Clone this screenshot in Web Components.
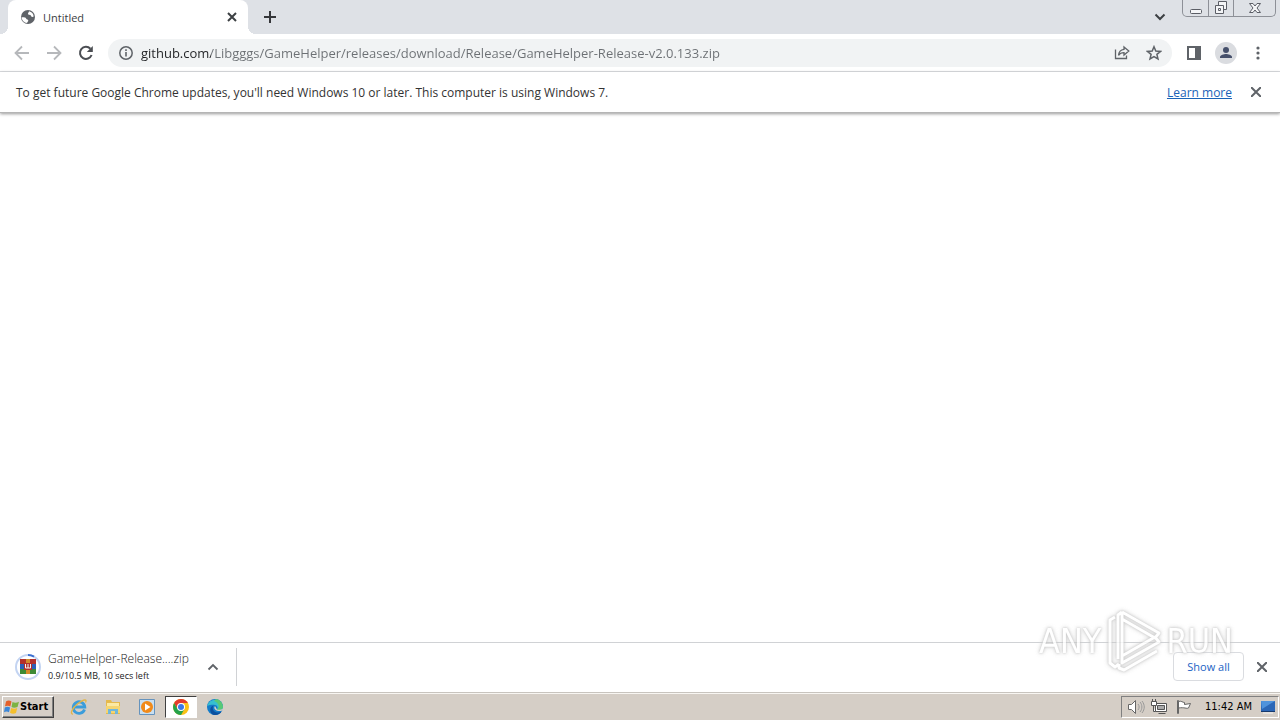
<!DOCTYPE html>
<html lang="en">
<head>
<meta charset="utf-8">
<title>Untitled</title>
<style>
html, body { margin: 0; height: 100%; }
body { background: #fff; font-family: "Open Sans", "Noto Sans", sans-serif; color: #333; }
</style>
</head>
<body>
<desktop-screen></desktop-screen>
<script>
const define = (name, html, init) => {
  const t = document.createElement('template');
  t.innerHTML = '<style>*{box-sizing:border-box}button{font:inherit;color:inherit;background:none;border:0;margin:0;padding:0}svg{display:block;flex:none}</style>' + html;
  customElements.define(name, class extends HTMLElement {
    constructor() {
      super();
      this.attachShadow({ mode: 'open' }).append(t.content.cloneNode(true));
    }
    connectedCallback() { if (init) init(this); }
  });
};

define('icon-button', `
<style>
:host{display:block;flex:none;width:32px;height:32px;color:#5f6368}
button{width:100%;height:100%;display:flex;align-items:center;justify-content:center}
</style>
<button type="button"><slot></slot></button>`, el => {
  el.shadowRoot.querySelector('button').setAttribute('aria-label', el.getAttribute('label') || '');
});

define('caption-buttons', `
<style>
:host{display:flex;flex:none;height:17px;border:1px solid #8d9097;border-top:0;border-radius:0 0 5px 5px;background:#dee1e6}
button{display:flex;flex:none;align-items:center;justify-content:center;width:25px}
button + button{border-left:1px solid #8d9097}
.close{width:42px}
svg{fill:#f4f5f7;stroke:#5b5e66}
</style>
<button type="button" aria-label="Minimize"><svg width="14" height="14"><rect x="1.5" y="8.500" width="11" height="4" rx="1"/></svg></button>
<button type="button" aria-label="Restore"><svg width="14" height="14"><path d="M4.500 .5h8v8h-8z"/><path d="M1.500 4.500h8v8h-8z"/><path d="M4.500 7.500h2v2h-2z"/></svg></button>
<button class="close" type="button" aria-label="Close"><svg width="14" height="14"><path d="M1.500 2.500h3.500l2 2.500 2-2.500h3.500l-3.500 4.500 3.500 4.500H9L7 9l-2 2.500H1.500L5 7z"/></svg></button>`);

define('tab-strip', `
<style>
:host{display:flex;height:34px;background:#dee1e6;padding-left:8px;align-items:flex-start;color:#3c4043}
.tab{position:relative;display:flex;align-items:center;width:240px;height:34px;padding:0 8px 0 12px;background:#fff;border-radius:8px 8px 0 0;font-size:11px}
.tab::before,.tab::after{content:"";position:absolute;bottom:0;width:8px;height:8px}
.tab::before{left:-8px;background:radial-gradient(circle at 0 0,#dee1e6 8px,#fff 8px)}
.tab::after{right:-8px;background:radial-gradient(circle at 100% 0,#dee1e6 8px,#fff 8px)}
.name{flex:1;margin-left:7px}
.close{width:16px;height:16px;color:#3c4043}
.new{width:28px;height:34px;margin-left:8px;color:#35363a}
.search{width:28px;height:34px;margin:0 8px 0 auto;color:#3c4043}
caption-buttons{margin-right:4px}
</style>
<div class="tab">
<svg width="16" height="16" viewBox="0 0 16 16"><circle cx="8" cy="8" r="7" fill="#5f6368"/><path d="M1.600 8.300c2 0 4-.2 4.500 1.200.4 1.200 2.400.6 2.200 2.300-.1 1-1 1-1.200 2.300C4 13.700 1.700 11.300 1.600 8.300z" fill="#fff"/><path d="M9 2.300a6 6 0 0 1 4.700 5.200c-1.200.8-2.300.3-2.700-.6C10.500 5.500 8 6.400 8 4.600 8 3.800 9 3.500 9 2.300z" fill="#fff"/></svg>
<span class="name">Untitled</span>
<icon-button class="close" label="Close tab"><svg width="10" height="10" stroke="currentColor" stroke-width="2"><path d="M1 1l8 8M9 1L1 9"/></svg></icon-button>
</div>
<icon-button class="new" label="New tab"><svg width="12" height="12" stroke="currentColor" stroke-width="2"><path d="M6 0v12M0 6h12"/></svg></icon-button>
<icon-button class="search" label="Search tabs"><svg width="12" height="8" fill="none" stroke="currentColor" stroke-width="2"><path d="M1.500 1.500L6 6l4.500-4.500"/></svg></icon-button>
<caption-buttons></caption-buttons>`);

define('address-field', `
<style>
:host{display:flex;align-items:center;flex:1;min-width:0;height:28px;padding:0 2px 0 10px;border-radius:14px;background:#f1f3f4;color:#5f6368}
input{flex:1;min-width:0;height:28px;margin:0 0 0 7px;padding:0;border:0;outline:0;font:13px "Open Sans","Noto Sans",sans-serif;color:#6c7074;-webkit-text-fill-color:transparent;background:linear-gradient(90deg,#202124 70px,#6c7074 70px);-webkit-background-clip:text;background-clip:text}
</style>
<svg width="16" height="16" fill="none" stroke="currentColor" stroke-width="1.500"><circle cx="8" cy="8" r="6.200"/><path d="M8 7v4.500M8 4.300v1.700" stroke-width="1.600"/></svg>
<input type="text" aria-label="Address and search bar" value="github.com/Libgggs/GameHelper/releases/download/Release/GameHelper-Release-v2.0.133.zip" spellcheck="false">
<icon-button label="Share"><svg width="16" height="16" fill="none" stroke="currentColor" stroke-width="1.300"><path d="M1.500 4.500v9h11v-3"/><path d="M10 2l4.800 4L10 10V7.700c-2.500 0-4.300.8-5.500 2.600C4.800 7 6.500 4.700 10 4.300z"/></svg></icon-button>
<icon-button label="Bookmark this tab"><svg width="16" height="16" fill="none" stroke="currentColor" stroke-width="1.500"><path d="M8 1.700l1.800 4.300 4.700.4-3.600 3 1.100 4.600-4-2.400-4 2.400 1.100-4.600-3.600-3 4.700-.4z"/></svg></icon-button>`);

define('browser-toolbar', `
<style>
:host{display:flex;align-items:center;height:38px;padding:0 6px;background:#fff;border-bottom:1px solid #dadce0}
.dim{color:#b6b8bb}
address-field{margin:0 6px}
.reload{color:#4b4e53}
</style>
<icon-button class="dim" label="Back"><svg width="16" height="16" fill="none" stroke="currentColor" stroke-width="1.800"><path d="M15 8H2M8 1.500L1.500 8 8 14.500"/></svg></icon-button>
<icon-button class="dim" label="Forward"><svg width="16" height="16" fill="none" stroke="currentColor" stroke-width="1.800"><path d="M1 8h13M8 1.500L14.500 8 8 14.500"/></svg></icon-button>
<icon-button class="reload" label="Reload"><svg width="16" height="16" fill="none" stroke="currentColor" stroke-width="2"><path d="M13.600 10a6 6 0 1 1-1.200-6.200"/><path d="M14.800 1v6H8.800z" fill="currentColor" stroke="none"/></svg></icon-button>
<address-field></address-field>
<icon-button label="Side panel"><svg width="14" height="14"><path fill="currentColor" fill-rule="evenodd" d="M0 0h14v14H0zM2 2v10h6V2z"/></svg></icon-button>
<icon-button label="Profile"><svg width="22" height="22"><circle cx="11" cy="11" r="11" fill="#dadce0"/><circle cx="11" cy="8" r="3" fill="#46506b"/><path d="M5 16v-1c0-2 4-3 6-3s6 1 6 3v1z" fill="#46506b"/></svg></icon-button>
<icon-button label="Menu"><svg width="4" height="16" fill="currentColor"><circle cx="2" cy="3" r="1.600"/><circle cx="2" cy="8" r="1.600"/><circle cx="2" cy="13" r="1.600"/></svg></icon-button>`);

define('info-bar', `
<style>
:host{display:flex;align-items:center;height:41px;padding:0 8px 0 16px;background:#fff;border-bottom:1px solid #b5b5b5;box-shadow:0 1px 3px #999;font-size:12px;color:#333;position:relative}
p{margin:0;flex:1}
a{color:#1a63b8;margin-right:8px}
</style>
<p>To get future Google Chrome updates, you'll need Windows 10 or later. This computer is using Windows 7.</p>
<a href="#">Learn more</a>
<icon-button label="Dismiss"><svg width="10" height="10" stroke="currentColor" stroke-width="2"><path d="M0 0l10 10M10 0L0 10"/></svg></icon-button>`);

define('download-item', `
<style>
:host{display:flex;align-items:center;width:237px;height:38px;padding-left:15px;border-right:1px solid #d0d2d5}
.text{flex:1;margin-left:7px;white-space:nowrap}
.file{font-size:12px;font-weight:300;line-height:18px;color:#222}
.state{font-size:9px;line-height:15px;color:#222}
icon-button{margin-right:7px}
</style>
<svg width="26" height="26" viewBox="0 0 26 26"><circle cx="13" cy="13" r="12" fill="#fff" stroke="#c3d4f2" stroke-width="2"/><path d="M13 1a12 12 0 0 1 6 1.600" fill="none" stroke="#3b6fd0" stroke-width="2"/>
<path fill="#b3302c" d="M5 5h16v5H5z"/><path fill="#2d5fb8" d="M5 10h16v5H5z"/><path fill="#3d8a35" d="M5 15h16v5H5z"/><path fill="#d48a2c" d="M11 5h4v15h-4z"/><path fill="#b3302c" d="M9 9h8v7H9z"/><path d="M10.500 10v4h5v-4M13 10v4" fill="none" stroke="#f5f5f5"/></svg>
<div class="text"><div class="file">GameHelper-Release....zip</div><div class="state">0.9/10.5 MB, 10 secs left</div></div>
<icon-button label="Download options"><svg width="12" height="8" fill="none" stroke="currentColor" stroke-width="1.800"><path d="M1.500 6.500L6 2l4.500 4.500"/></svg></icon-button>`);

define('download-shelf', `
<style>
:host{display:flex;align-items:center;height:50px;background:#fff;border-top:1px solid #d0d2d5;padding:0 2px 2px 0}
.all{width:71px;height:29px;margin-left:auto;margin-right:2px;border:1px solid #dadce0;border-radius:4px;color:#1a63c4;font-size:11px}
</style>
<download-item></download-item>
<button class="all" type="button">Show all</button>
<icon-button label="Close downloads"><svg width="10" height="10" stroke="currentColor" stroke-width="2"><path d="M0 0l10 10M10 0L0 10"/></svg></icon-button>`);

define('task-bar', `
<style>
:host{display:flex;align-items:center;height:28px;background:#d5cec6;border-top:1px solid #c8c4be;box-shadow:inset 0 1px #f8f6f2;padding:0 1px 0 2px;color:#000;font:11px "DejaVu Sans Condensed","Noto Sans",sans-serif}
.start{display:flex;align-items:center;width:52px;height:22px;padding-left:1px;border:1px solid;border-color:#fff #404040 #404040 #fff;box-shadow:inset -1px -1px #808080;font:bold 11px "DejaVu Sans Condensed",sans-serif}
nav{display:flex;align-items:center;margin-left:9px;gap:2px}
nav icon-button{height:22px}
.active{background:#fff;border:1px solid;border-color:#404040 #fff #fff #404040}
.tray{display:flex;align-items:center;height:22px;margin-left:auto;padding:0 2px 0 5px;gap:6px;border:1px solid;border-color:#808080 #fff #fff #808080}
time{margin:0 2px 0 6px}
</style>
<button class="start" type="button"><svg width="16" height="16"><path d="M2 2.500C4 1 6 1.500 7.500 2.500L6.300 7.500C5 6.500 3 6.300 1 7.300z" fill="#e5602a"/><path d="M8.500 3c2 1 4 1 6.500-.3L13.500 8c-2.500 1-4.500.800-6 0z" fill="#7cb342"/><path d="M.8 8.400c2-1 4-.6 5.300.2L5 13.300c-1.500-1-3.500-1-5 0z" fill="#3c87d8"/><path d="M7.200 9c2 1 4 1 6 0L12 14c-2.200 1-4.200.8-6-.3z" fill="#f4bf2c"/></svg><span>Start</span></button>
<nav>
<icon-button label="Internet Explorer"><svg width="18" height="18" fill="none"><path d="M14.500 11.500A5.800 5.800 0 1 1 14.800 9H4" stroke="#3b9ddb" stroke-width="2.800"/><path d="M3 16C-.5 16.500 2 10 8 5.500S17.500 1 15.500 4.500" stroke="#e2b548" stroke-width="1.300"/></svg></icon-button>
<icon-button label="Explorer"><svg width="18" height="18"><path d="M2 2h5l1 2h8v12H2z" fill="#e5b94d"/><path d="M3 5h12v7H3z" fill="#fbe9a3"/><path d="M2 8h14v7H2z" fill="#f5d571"/><path d="M4 16v-5h10v5h-3v-3H7v3z" fill="#70b7db"/></svg></icon-button>
<icon-button label="Media Player"><svg width="18" height="18"><path d="M1.500 1.500h15v15h-15z" fill="#c9dff0" stroke="#6593bd"/><circle cx="9" cy="9" r="6" fill="#f18a19"/><path d="M7 5.500v7L12.500 9z" fill="#fff"/></svg></icon-button>
<icon-button class="active" label="Chrome"><svg width="16" height="16" viewBox="0 0 16 16"><circle cx="8" cy="8" r="8" fill="#fbc116"/><path d="M8 4h6.900A8 8 0 0 0 1.100 4l3.400 6z" fill="#e33b2e"/><path d="M1.100 4A8 8 0 0 0 8 16l3.500-6L8 8 4.500 10z" fill="#25a24a"/><circle cx="8" cy="8" r="4" fill="#fff"/><circle cx="8" cy="8" r="3" fill="#3b78e7"/></svg></icon-button>
<icon-button label="Edge"><svg width="18" height="18"><circle cx="9" cy="9" r="8" fill="#137bc9"/><path d="M1.200 8A8 8 0 0 1 17 9c0 3-4 3.700-6 2.500 1-1 1-4-2-4.500-3-.4-6 .2-7.800 1z" fill="#36bfd0"/><path d="M10 1.100A8 8 0 0 1 17 9c0 3-4 3.700-6 2.500C14 9 13 5 8 3z" fill="#58c976"/><path d="M7.500 7.500c-2 3 0 7 5 7 1.500 0 2.500-.5 3.300-1.200A8 8 0 0 1 7 16.700C3 14 3.500 9 7.500 7.500z" fill="#0b4f9e"/><path d="M9 8c-1.500 1.500-.5 4.500 3.500 5 2 .3 4.200-.7 4.200-.7l.6-2.300C15 12.300 12 12 11 11.500z" fill="#d5cec6"/></svg></icon-button>
</nav>
<div class="tray">
<svg width="18" height="16" fill="#fff" stroke="#666"><path d="M1.500 5.500h3l4-4v13l-4-4h-3z"/><path d="M11 5c1.500 2 1.500 4 0 6M13 3c2.500 3 2.500 7 0 10M15 2c3 4 3 8 0 12" fill="none" stroke="#999"/></svg>
<svg width="18" height="16" fill="#fff" stroke="#555"><path d="M4.500 4.500h11v8h-11zM7.500 14.500h7M2.500 7v5.500h2"/><path d="M6.500 6.500h7v4h-7z" fill="#aaa"/><path d="M.5 2.500h5v4h-5zM1.500 0v2M4.500 0v2"/></svg>
<svg width="18" height="16" fill="#fff" stroke="#666"><path d="M2.500 1.500h1v13h-1z"/><path d="M3.500 2.500c3-1 4 1 6 1v2l6-1-2 4.500c-2 1-4-1-10 0z"/></svg>
<time datetime="11:42">11:42 AM</time>
<svg width="16" height="16"><path d="M1 2h14v10H1z" fill="#2b67b7"/><path d="M1 2h14L2 10z" fill="#4f93dc"/><path d="M1 12h14v1H1z" fill="#173a6d"/><path d="M3 14h10" stroke="#f4f4f4"/></svg>
</div>`);

define('water-mark', `
<style>
:host{display:flex;align-items:center;justify-content:space-between;width:194px;height:64px;color:#fff;font:34px "DejaVu Sans Condensed",sans-serif;line-height:36px;filter:drop-shadow(0 0 1px #bbb) drop-shadow(0 0 2px #ccc);opacity:.8;pointer-events:none}
</style>
<span>ANY</span>
<svg width="58" height="64" fill="none" stroke="#fff" stroke-width="3" stroke-linejoin="round"><path d="M17 3v44M17 3l37 21-4 5-33-19M17 47l33-19 4 5-37 21v-7M17 3l-4 3v44M10 8l-5 3v43l5 4 4-3M14 55v4l5 2 33-19"/></svg>
<span>RUN</span>`);

define('desktop-screen', `
<style>
:host{display:flex;flex-direction:column;min-height:100vh;position:relative;background:#fff}
main{flex:1}
water-mark{position:absolute;right:47px;bottom:47px}
</style>
<tab-strip></tab-strip>
<browser-toolbar></browser-toolbar>
<info-bar></info-bar>
<main></main>
<download-shelf></download-shelf>
<task-bar></task-bar>
<water-mark></water-mark>`);
</script>
</body>
</html>
